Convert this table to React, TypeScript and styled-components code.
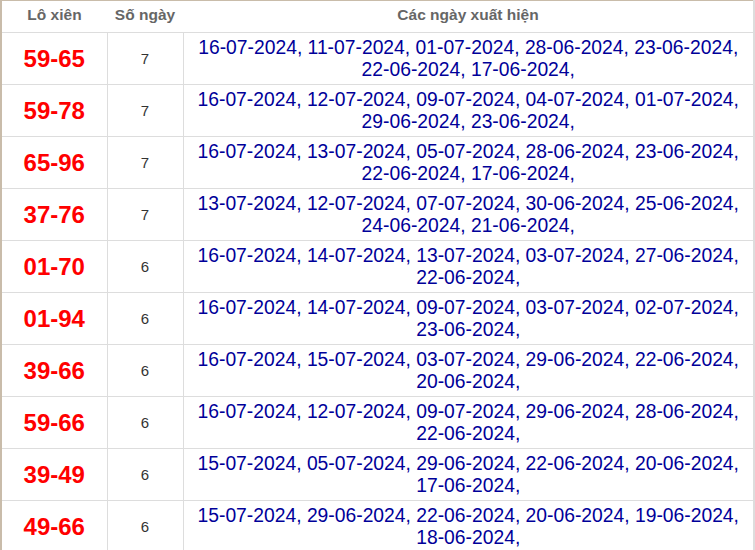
import React from 'react';
import styled, { createGlobalStyle } from 'styled-components';

interface IRow {
  pair: string;
  count: number;
  dates: string[];
}

const rows: IRow[] = [
  { pair: '59-65', count: 7, dates: ['16-07-2024', '11-07-2024', '01-07-2024', '28-06-2024', '23-06-2024', '22-06-2024', '17-06-2024'] },
  { pair: '59-78', count: 7, dates: ['16-07-2024', '12-07-2024', '09-07-2024', '04-07-2024', '01-07-2024', '29-06-2024', '23-06-2024'] },
  { pair: '65-96', count: 7, dates: ['16-07-2024', '13-07-2024', '05-07-2024', '28-06-2024', '23-06-2024', '22-06-2024', '17-06-2024'] },
  { pair: '37-76', count: 7, dates: ['13-07-2024', '12-07-2024', '07-07-2024', '30-06-2024', '25-06-2024', '24-06-2024', '21-06-2024'] },
  { pair: '01-70', count: 6, dates: ['16-07-2024', '14-07-2024', '13-07-2024', '03-07-2024', '27-06-2024', '22-06-2024'] },
  { pair: '01-94', count: 6, dates: ['16-07-2024', '14-07-2024', '09-07-2024', '03-07-2024', '02-07-2024', '23-06-2024'] },
  { pair: '39-66', count: 6, dates: ['16-07-2024', '15-07-2024', '03-07-2024', '29-06-2024', '22-06-2024', '20-06-2024'] },
  { pair: '59-66', count: 6, dates: ['16-07-2024', '12-07-2024', '09-07-2024', '29-06-2024', '28-06-2024', '22-06-2024'] },
  { pair: '39-49', count: 6, dates: ['15-07-2024', '05-07-2024', '29-06-2024', '22-06-2024', '20-06-2024', '17-06-2024'] },
  { pair: '49-66', count: 6, dates: ['15-07-2024', '29-06-2024', '22-06-2024', '20-06-2024', '19-06-2024', '18-06-2024'] },
];

const App = () => {
  return (
    <>
      <GlobalStyle />
      <StyledTable>
        <thead>
          <tr>
            <StyledHead width={105}>Lô xiên</StyledHead>
            <StyledHead width={76}>Số ngày</StyledHead>
            <StyledHead>Các ngày xuất hiện</StyledHead>
          </tr>
        </thead>
        <tbody>
          {rows.map((row) => (
            <tr key={row.pair}>
              <StyledPair>{row.pair}</StyledPair>
              <StyledCount>{row.count}</StyledCount>
              <StyledDates>
                {row.dates.map((d) => (
                  <span key={d}>{d}, </span>
                ))}
              </StyledDates>
            </tr>
          ))}
        </tbody>
      </StyledTable>
    </>
  );
};

export default App;

const GlobalStyle = createGlobalStyle`
  body {
    margin: 0;
    background: #fff;
    font-family: "Liberation Sans", Arial, sans-serif;
  }
`;

const StyledTable = styled.table`
  width: 755px;
  border-collapse: collapse;
  table-layout: fixed;
  border-top: 1px solid #c9bcaa;
  border-left: 2px solid #c9bcaa;
`;

const StyledHead = styled.th<{ width?: number }>`
  width: ${(p) => (p.width ? `${p.width}px` : 'auto')};
  height: 27px;
  padding: 0 0 4px;
  font-size: 15.5px;
  font-weight: 700;
  color: #666;
  text-align: center;
  vertical-align: middle;
  border-bottom: 1px solid #ddd;
  &:last-child {
    border-right: 2px solid #ddd;
  }
`;

const StyledCell = styled.td`
  padding: 0;
  border: 1px solid #ddd;
  text-align: center;
  vertical-align: middle;
`;

const StyledPair = styled(StyledCell)`
  font-size: 24px;
  font-weight: 700;
  color: #f00;
`;

const StyledCount = styled(StyledCell)`
  font-size: 15px;
  color: #333;
`;

const StyledDates = styled(StyledCell)`
  height: 40px;
  padding: 4px 4px 3px;
  font-size: 19.3px;
  line-height: 22px;
  color: #000099;
  border-right: 2px solid #ddd;
`;
